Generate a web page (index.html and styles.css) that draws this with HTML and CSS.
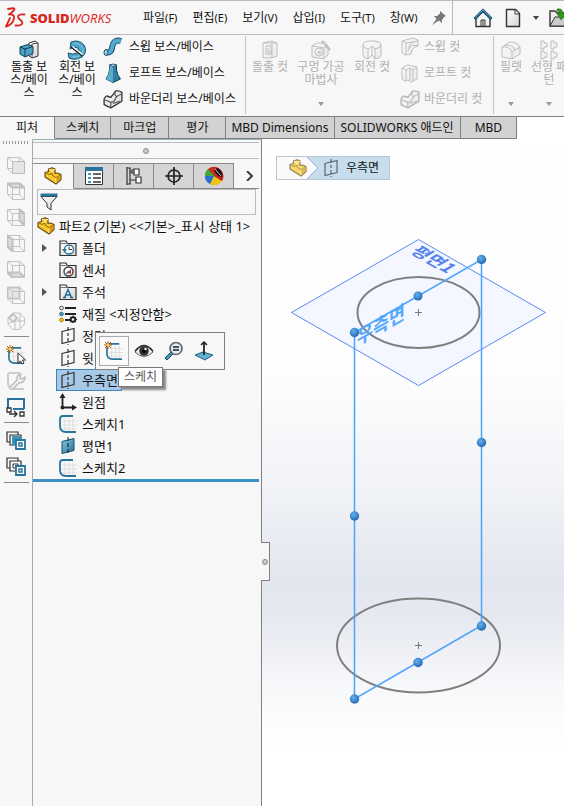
FILE: index.html
```html
<!DOCTYPE html>
<html lang="ko">
<head>
<meta charset="utf-8">
<title>SOLIDWORKS</title>
<link rel="stylesheet" href="styles.css">
</head>
<body>
<svg class="defs" aria-hidden="true">
  <defs>
    <linearGradient id="teal" x1="0" y1="0" x2="1" y2="1"><stop offset="0" stop-color="#8ccbe6"/><stop offset="1" stop-color="#1f6f94"/></linearGradient>
    <linearGradient id="paper" x1="0" y1="0" x2="1" y2="1"><stop offset="0" stop-color="#fff"/><stop offset="1" stop-color="#d4d4d4"/></linearGradient>
    <radialGradient id="ball" cx=".4" cy=".35" r=".7"><stop offset="0" stop-color="#62b2ee"/><stop offset="1" stop-color="#2263ad"/></radialGradient>
    <symbol id="part" viewBox="0 0 18 18">
      <path d="M1 5.500 4.500 4.500V2L8 .7 11 2v4.500L13.500 6 17 7.500v5L12 17 1 10Z" fill="#f8c92c" stroke="#6b4b12" stroke-width="1.200" stroke-linejoin="round"/>
      <path d="M1.500 5.500 5 7.500l3-1.500v2l4 2.700 4.500-3" fill="none" stroke="#8a6416"/>
      <path d="m5 2.300 3 1.200L11 2.300M8 3.500V6M12 11v5" fill="none" stroke="#fff0a8"/>
      <path d="m12.500 11.500 4-3.500v4.500l-4 3.500Z" fill="#d99a12"/>
    </symbol>
    <symbol id="plane" viewBox="0 0 18 18">
      <path d="M3 4.500 15 1.500v12L3 16.500Z" fill="none" stroke="#333" stroke-width="1.200"/>
      <path d="M9 0v18" stroke="#333" stroke-width="1.200" stroke-dasharray="4 2 3 2"/>
    </symbol>
    <symbol id="sketch" viewBox="0 0 18 18">
      <path d="M6 3v14M10 3v14M14 3v14M3 6h15M3 10h15M3 14h15" stroke="#ddd"/>
      <path d="M14 1H4Q1 1 1 4v7q0 6 6 6h10" fill="none" stroke="#27749c" stroke-width="1.800"/>
    </symbol>
    <symbol id="spark" viewBox="0 0 8 8">
      <path d="M4 0v8M0 4h8M1 1l6 6M7 1 1 7" stroke="#b35a00"/><circle cx="4" cy="4" r="1.500" fill="#ffd24a"/>
    </symbol>
    <symbol id="folder" viewBox="0 0 18 18">
      <path d="M1 16.500V2h6l1.500 2.500H17v12Z" fill="url(#paper)" stroke="#333" stroke-width="1.200"/>
      <path d="M1.500 4.500H9" stroke="#777"/>
    </symbol>
    <symbol id="cube" viewBox="0 0 18 18">
      <path d="M.5 1.500h12v11H.5ZM5.500 5.500h12v12h-12ZM.5 1.500l5 4M12.500 1.500l5 4M.5 12.500l5 5M12.500 12.500l5 5" fill="none" stroke="#c3c3c3"/>
    </symbol>
    <symbol id="boundary" viewBox="0 0 18 18">
      <path d="M1 9q2-4 4-2t6-5q3-1 6 1v8L7 17 1 14Z" fill="url(#paper)" stroke="#333" stroke-width="1.200" stroke-linejoin="round"/>
      <path d="M1 9.500 7 12q3 0 4-3t6-4.500M7 12v5M5 7q2 1 3 0M11 2q-1 3 1 5M9 13l6-2" fill="none" stroke="#555"/>
    </symbol>
    <symbol id="layers" viewBox="0 0 20 20">
      <path d="M1 1h11v10H1Z" fill="#f7f7f7" stroke="#333" stroke-width="1.200"/><path d="M4 4h11v10H4Z" fill="#f7f7f7" stroke="#333" stroke-width="1.200"/>
    </symbol>
    <symbol id="layerbadge" viewBox="0 0 20 20">
      <path d="M10 9h9v9h-9Z" fill="#fff" stroke="#27749c" stroke-width="1.800"/><path d="M13 12h3v3h-3Z" fill="#fff" stroke="#27749c" stroke-width="1.500"/>
    </symbol>
    <symbol id="caret" viewBox="0 0 6 4"><path d="M0 0h6L3 4Z" fill="currentColor"/></symbol>
  </defs>
</svg>

<header class="menubar">
  <a class="logo" href="#" aria-label="SOLIDWORKS">
    <svg class="ds" viewBox="0 0 22 22" fill="none" stroke="#d9261c" stroke-width="1.800" stroke-linecap="round" stroke-linejoin="round">
      <path d="M3 2q7-1.500 6.500 0Q9 4 4 7.500q6-.5 5 4Q7.500 18 1 19.500L5 11"/>
      <path d="M19.500 7.500q-6-.5-6.500 2 0 1.500 2.500 3.500t1.500 4q-1.500 2-6.500 1.500"/>
    </svg>
    <span class="word"><b>SOLID</b>WORKS</span>
  </a>
  <nav class="menus">
    <button>파일<small>(F)</small></button>
    <button>편집<small>(E)</small></button>
    <button>보기<small>(V)</small></button>
    <button>삽입<small>(I)</small></button>
    <button>도구<small>(T)</small></button>
    <button>창<small>(W)</small></button>
  </nav>
  <button class="pin" aria-label="고정"><svg class="i14" viewBox="0 0 14 14"><path d="m8 0 6 5-2 1-2 3v3L7 9.500 0 14l4.500-6L2 5h3l3-2.500Z" fill="#777"/></svg></button>
  <div class="quick">
    <button aria-label="홈"><svg class="i20" viewBox="0 0 20 20"><path d="M3 9v9.500h14V9l-7-6Z" fill="#f5f5f5" stroke="#333" stroke-width="1.400"/><path d="m1.500 11 8.500-8.500 8.500 8.500" fill="none" stroke="#174f70" stroke-width="3"/><path d="M2 10 10 2l8 8" fill="none" stroke="#4c9fc5"/><path d="M8 18v-6h4v6M10 12v6" fill="none" stroke="#333"/></svg></button>
    <button aria-label="새로 만들기"><svg class="i20" viewBox="0 0 20 20"><path d="M3.500 1.500h9l4 4v13h-13Z" fill="url(#paper)" stroke="#333" stroke-width="1.400"/><path d="M12 2v4h4" fill="#fff" stroke="#333"/></svg></button>
    <button class="more" aria-label="새로 만들기 옵션"><svg class="caret"><use href="#caret"/></svg></button>
    <button aria-label="열기"><svg class="i20" viewBox="0 0 20 20"><path d="M1 18V3h5l2 2h10v13Z" fill="#ececec" stroke="#333" stroke-width="1.400"/><path d="m1 18 5-9h14l-5 9Z" fill="#ccc" stroke="#333"/><path d="M8 1q6-1 6 5h3l-5 6-4-6h3q0-3-3-3Z" fill="#2e9b19" stroke="#1c6b0f" stroke-width=".5"/></svg></button>
  </div>
</header>

<section class="ribbon">
  <div class="group boss">
    <button class="big"><svg class="i20" viewBox="0 0 20 20"><path d="M10 3 16 1l3 2v13l-6 2-3-2Z" fill="url(#paper)" stroke="#333"/><path d="m13 4 6-1M13 4v13" stroke="#555"/><path d="m1 7 8-2.500 5 2v7L6 17l-5-3Z" fill="#4ca3c6" stroke="#123f55"/><path d="m1 7 5 2 8-2.500M6 9v8" fill="none" stroke="#123f55"/></svg><span>돌출 보스/베이스</span></button>
    <button class="big"><svg class="i20" viewBox="0 0 20 20"><path d="M4 2q8-3 13 3 4 7-2 12-7 4-13 1l-1-5q5 2 9 0 3-2 1-5-4-2-8 1Z" fill="#4ca3c6" stroke="#175875"/><path d="M6 3q6 0 9 4t-1 8q-4 3-9 2" fill="none" stroke="#8bcce5"/><path d="m5 7 10 8" stroke="#fff" stroke-width="2.500"/><path d="m4 7 11 9" stroke="#111" stroke-width="1.200"/></svg><span>회전 보스/베이스</span></button>
    <ul class="list">
      <li><button><svg class="i20" viewBox="0 0 20 20"><path d="M2 15q6 2 7-4t4-7q2-1 5 0" fill="none" stroke="#174f6b" stroke-width="6"/><path d="M2 15q6 2 7-4t4-7q2-1 5 0" fill="none" stroke="#55acd0" stroke-width="4"/><ellipse cx="3" cy="15.500" rx="2" ry="3" fill="#92cfe8" stroke="#174f6b"/></svg><span>스윕 보스/베이스</span></button></li>
      <li><button><svg class="i20" viewBox="0 0 20 20"><path d="M6.500 2v5q-.5 5-3.500 9l7 3.500 7.500-3.500q-3.500-4-4-9V2Z" fill="#2f7fa5" stroke="#123f55"/><path d="M6.500 7q-.5 5-3.500 9l7 3.500V4l-3.500-2Z" fill="#5eaecb"/><path d="M6.500 2q3.500-2 7 0-3.500 3-7 0" fill="#e8f3f8" stroke="#295f78"/></svg><span>로프트 보스/베이스</span></button></li>
      <li><button><svg class="i20"><use href="#boundary"/></svg><span>바운더리 보스/베이스</span></button></li>
    </ul>
  </div>
  <div class="group cut off">
    <button class="big" disabled><svg class="i20" viewBox="0 0 20 20"><path d="m3 3 9-2 5 2v13l-5 2H3Z" fill="url(#paper)" stroke="#555"/><path d="M3 3h9v15M12 3h5M6 6h5v8H6Zm2 2v4h4" fill="none" stroke="#555"/></svg><span>돌출 컷</span></button>
    <button class="big wide" disabled><svg class="i20" viewBox="0 0 20 20"><path d="m1 6 5-3h8l3 3v9l-4 4-12-2Z" fill="url(#paper)" stroke="#555"/><circle cx="8" cy="12" r="4" fill="none" stroke="#555"/><circle cx="8.500" cy="12.500" r="2" fill="#888"/><path d="m1 6 12 2v11M13 8l4-2" fill="none" stroke="#555"/><path d="m11 1 8 9" stroke="#555" stroke-width="2.500"/><path d="M14 1v4M12 3h4" stroke="#999"/></svg><span>구멍 가공 마법사</span><svg class="caret low"><use href="#caret"/></svg></button>
    <button class="big" disabled><svg class="i20" viewBox="0 0 20 20"><path d="M1 5q0-4 9-4t9 4v10q0 3-6 4V9l-3-3-4 4v9q-5-1-5-4Z" fill="url(#paper)" stroke="#555"/><path d="M10 6v9l-4 4M10 15l3 4M1 5q0 3 5 4M19 5q0 3-6 4" fill="none" stroke="#555"/></svg><span>회전 컷</span></button>
    <ul class="list">
      <li><button disabled><svg class="i20" viewBox="0 0 20 20"><path d="M2 4 13 1l5 2v6q-6 1-7 8l-6 1-3-2Z" fill="url(#paper)" stroke="#555"/><path d="m2 4 4 2 12-2M6 6v12M18 9q-8-3-10 5M14 5q-5 1-5 6" fill="none" stroke="#555"/></svg><span>스윕 컷</span></button></li>
      <li><button disabled><svg class="i20" viewBox="0 0 20 20"><path d="m2 5 6-3 9 2v12l-6 3-3-2-3 1-3-2Z" fill="url(#paper)" stroke="#555"/><path d="m2 5 4 2 4-2 3 2 4-3M6 7v11M10 5v12M13 7v11" fill="none" stroke="#555"/></svg><span>로프트 컷</span></button></li>
      <li><button disabled><svg class="i20"><use href="#boundary"/></svg><span>바운더리 컷</span></button></li>
    </ul>
  </div>
  <div class="group feature off">
    <button class="big" disabled><svg class="i20" viewBox="0 0 20 20"><path d="m1 7 8-5q7 0 10 5v7l-8 5-10-2Z" fill="url(#paper)" stroke="#555"/><path d="M1 7q8-1 10 5v7M11 12l8-5M4 5q8 0 10 5" fill="none" stroke="#555"/></svg><span>필렛</span><svg class="caret low"><use href="#caret"/></svg></button>
    <button class="big" disabled><svg class="i20" viewBox="0 0 20 20"><path d="M2 1h3v2h3v4H5v2H2ZM12 1h3v2h3v4h-3v2h-3ZM2 11h3v2h3v4H5v2H2ZM12 11h3v2h3v4h-3v2h-3Z" fill="#eee" stroke="#555"/></svg><span>선형 패턴</span><svg class="caret low"><use href="#caret"/></svg></button>
  </div>
</section>

<nav class="tabs">
  <button class="on">피처</button><button>스케치</button><button>마크업</button><button>평가</button><button>MBD Dimensions</button><button>SOLIDWORKS 애드인</button><button>MBD</button>
</nav>

<main class="work">
  <aside class="side">
    <i class="grip"></i>
    <button aria-label="정면 보기"><svg class="i18" viewBox="0 0 18 18"><use href="#cube" width="18" height="18"/><path d="M5.500 5.500h12v12h-12Z" fill="#e6e6e6" stroke="#bbb"/></svg></button>
    <button aria-label="윗면 보기"><svg class="i18" viewBox="0 0 18 18"><path d="M.5 1.500h12l5 4h-12Z" fill="#ddd" stroke="#bbb" stroke-width="2"/><use href="#cube" width="18" height="18"/></svg></button>
    <button aria-label="우측면 보기"><svg class="i18" viewBox="0 0 18 18"><path d="m12.500 1.500 5 4v12l-5-5Z" fill="#ddd" stroke="#bbb" stroke-width="2"/><use href="#cube" width="18" height="18"/></svg></button>
    <button aria-label="좌측면 보기"><svg class="i18" viewBox="0 0 18 18"><path d="m.5 1.500 5 4v12l-5-5Z" fill="#ddd" stroke="#bbb" stroke-width="2"/><use href="#cube" width="18" height="18"/></svg></button>
    <button aria-label="아랫면 보기"><svg class="i18" viewBox="0 0 18 18"><path d="M.5 12.500h12l5 5h-12Z" fill="#ddd" stroke="#bbb" stroke-width="2"/><use href="#cube" width="18" height="18"/></svg></button>
    <button aria-label="배면 보기"><svg class="i18" viewBox="0 0 18 18"><path d="M.5 1.500h12v11H.5Z" fill="#e6e6e6" stroke="#ccc" stroke-width="2"/><use href="#cube" width="18" height="18"/></svg></button>
    <button aria-label="등각 보기"><svg class="i18" viewBox="0 0 18 18"><path d="M1 5.500 6 1h7l4.500 5v6l-5 5.500H6L1 12ZM6 1v3l7 5V1M1 12l5-3h11.500M8 9v8.500M13 9v8" fill="none" stroke="#c3c3c3"/><path d="m6 2 4 4-4 4-4-4Z" fill="#eee" stroke="#bbb" stroke-width="1.500"/></svg></button>
    <hr>
    <button aria-label="스케치 선택"><svg class="i20" viewBox="0 0 20 20"><use href="#sketch" x="2" y="2" width="17" height="17"/><use href="#spark" x="0" y="0" width="8" height="8"/><path d="M12 8v10l2.500-2 1.500 3 2-1-1.500-3h3Z" fill="#fff" stroke="#333"/></svg></button>
    <button aria-label="도구"><svg class="i20" viewBox="0 0 20 20"><path d="M14 2H4Q2 2 2 4v8q0 6 6 6h10" fill="none" stroke="#ccc" stroke-width="2"/><path d="m4 16 7-7q-1-5 4-6l-1 4 2 1 3-2q0 6-6 6l-6 6q-3 1-3-2Z" fill="#eee" stroke="#bbb" stroke-width="1.300"/></svg></button>
    <button aria-label="구속 조건"><svg class="i20" viewBox="0 0 20 20"><path d="M2 12V2h16v10M7 12h11" fill="none" stroke="#27749c" stroke-width="2"/><path d="M1 11h4v4H1ZM14 15h4v4h-4Z" fill="#fff" stroke="#333" stroke-width="1.300"/><path d="M3 17h8M8 14l3 3-3 3" fill="none" stroke="#333" stroke-width="1.400"/></svg></button>
    <hr>
    <button aria-label="레이어"><svg class="i20" viewBox="0 0 20 20"><use href="#layers" width="20" height="20"/><path d="M6 5h9v9H6Z" fill="#3d93bb"/><use href="#layerbadge" width="20" height="20"/></svg></button>
    <button aria-label="레이어 속성"><svg class="i20" viewBox="0 0 20 20"><use href="#layers" width="20" height="20"/><path d="M7 7h5v4H7Z" fill="#fff" stroke="#333"/><use href="#layerbadge" width="20" height="20"/></svg></button>
    <hr>
  </aside>

  <aside class="panel">
    <div class="handle"><i class="dot"></i></div>
    <nav class="ptabs">
      <button class="on" aria-label="FeatureManager"><svg class="i18"><use href="#part"/></svg></button>
      <button aria-label="PropertyManager"><svg class="i20" viewBox="0 0 20 20"><path d="M1.500 1.500h17v17h-17Z" fill="#fff" stroke="#333"/><path d="M1 1h18v4H1Z" fill="#27749c"/><path d="M4 7h3v2H4ZM4 11h3v2H4ZM4 15h3v2H4Z" fill="#3f95bd"/><path d="M9 8h8M9 12h8M9 16h8" stroke="#333" stroke-width="1.500"/></svg></button>
      <button aria-label="ConfigurationManager"><svg class="i20" viewBox="0 0 20 20"><path d="M3 1v18M3 2h4M3 18h4M6 2v16M6 6h5M6 14h6" fill="none" stroke="#333" stroke-width="1.200"/><path d="M10 3h5v6h-5ZM12 11h5v6h-5ZM8 4h2v3H8Z" fill="#fff" stroke="#333" stroke-width="1.200"/></svg></button>
      <button aria-label="DimXpertManager"><svg class="i20" viewBox="0 0 20 20"><circle cx="10" cy="10" r="6" fill="none" stroke="#222" stroke-width="1.700"/><path d="M10 1v18M1 10h18" stroke="#222" stroke-width="1.700"/></svg></button>
      <button aria-label="DisplayManager"><svg class="i20" viewBox="0 0 20 20"><circle cx="10" cy="10" r="9" fill="#2477c8"/><path d="M10 10 4 3a9 9 0 0 1 13 1Z" fill="#d9271e"/><path d="M10 10 4 3a9 9 0 0 0-3 7Z" fill="#40a936"/><path d="M10 10H1a9 9 0 0 0 5 8Z" fill="#2d6fd0"/><path d="M10 10 6 18a9 9 0 0 0 12-3Z" fill="#f2c313"/><path d="M10 10 17 4a9 9 0 0 1 1 11Z" fill="#c42418"/><path d="M10 4q3-3 5-1 4 4 3 8-6-1-8-7Z" fill="#111"/><path d="m11 3 6 7" stroke="#fff" stroke-width=".8"/></svg></button>
      <button class="next" aria-label="다음"><svg class="i10" viewBox="0 0 10 10"><path d="m3 0 5 5-5 5" fill="none" stroke="#333" stroke-width="1.800"/></svg></button>
    </nav>
    <label class="filter">
      <svg class="i18" viewBox="0 0 18 18"><path d="M1 3.500h16l-6 7v6.500l-4-3v-3.500Z" fill="url(#paper)" stroke="#333"/><path d="M.5.500h17v3H.5Z" fill="#27749c"/></svg>
      <input type="text" aria-label="필터">
    </label>
    <ul class="tree">
      <li class="root"><svg class="i18"><use href="#part"/></svg><span>파트2 (기본) &lt;&lt;기본&gt;_표시 상태 1&gt;</span></li>
      <li class="fold"><svg class="i18" viewBox="0 0 18 18"><use href="#folder" width="18" height="18"/><circle cx="10" cy="10.500" r="4.500" fill="#fff" stroke="#27749c" stroke-width="1.300"/><path d="M10 7.500v3h3" fill="none" stroke="#333"/><path d="m3 10 2.500 3.500L8 10Z" fill="#27749c"/></svg><span>폴더</span></li>
      <li><svg class="i18" viewBox="0 0 18 18"><use href="#folder" width="18" height="18"/><circle cx="9.500" cy="10.500" r="4.500" fill="#fff" stroke="#333" stroke-width="1.300"/><path d="m8 12 4-4v5Z" fill="#e2341d"/><path d="m7 13 3-3" stroke="#27749c" stroke-width="1.500"/></svg><span>센서</span></li>
      <li class="fold"><svg class="i18" viewBox="0 0 18 18"><use href="#folder" width="18" height="18"/><path d="m5.500 14.500 3.500-8 3.500 8M6.500 12h5M4 14.500h3M11 14.500h3" fill="none" stroke="#206b92" stroke-width="1.400"/></svg><span>주석</span></li>
      <li><svg class="i18" viewBox="0 0 18 18"><path d="M6 3h11M6 9h11M6 15h5" stroke="#222" stroke-width="2"/><circle cx="2.500" cy="3" r="1.800" fill="#fff" stroke="#444"/><circle cx="2.500" cy="9" r="1.800" fill="#4ca3c6" stroke="#206b92"/><circle cx="2.500" cy="15" r="1.800" fill="#fc0" stroke="#a87700"/><circle cx="14" cy="14.500" r="2.300" fill="#fff" stroke="#222" stroke-width="2"/><path d="M14 10.500v8M10 14.500h8M11.200 11.700l5.600 5.600M16.800 11.700l-5.600 5.600" stroke="#222" stroke-dasharray="2 4 2"/></svg><span>재질 &lt;지정안함&gt;</span></li>
      <li><svg class="i18"><use href="#plane"/></svg><span>정면</span></li>
      <li><svg class="i18"><use href="#plane"/></svg><span>윗면</span></li>
      <li class="sel"><svg class="i18"><use href="#plane"/></svg><span>우측면</span>
        <div class="flyout" role="toolbar">
          <button class="on" aria-label="스케치"><svg class="i20" viewBox="0 0 20 20"><use href="#sketch" x="2" y="2" width="17" height="17"/><use href="#spark" width="8" height="8"/></svg></button>
          <button aria-label="표시"><svg class="i20" viewBox="0 0 20 20"><path d="M1 11q9-12 18 0-9 9-18 0Z" fill="#eee" stroke="#555"/><circle cx="10" cy="10" r="4.800" fill="#333"/><circle cx="10" cy="10" r="2" fill="#000"/><circle cx="11.500" cy="8" r="1.200" fill="#fff"/><path d="M1 10Q10-1 19 10" fill="none" stroke="#333" stroke-width="1.300"/></svg></button>
          <button aria-label="선택 확대"><svg class="i20" viewBox="0 0 20 20"><path d="m1 17 6-6 2 2-6 6Z" fill="#3e95bd" stroke="#174f6b"/><circle cx="12" cy="7.500" r="6" fill="#dcebf2" stroke="#666" stroke-width="1.700"/><path d="M9 6h6M9 9h6" stroke="#222" stroke-width="1.600"/></svg></button>
          <button aria-label="면에 수직으로 보기"><svg class="i20" viewBox="0 0 20 20"><path d="m1 14 8-3 10 3-8 5Z" fill="#63b1d0" stroke="#1e607f"/><path d="M10 14V2" stroke="#222" stroke-width="1.800"/><path d="m7 4 3-3 3 3" fill="none" stroke="#222" stroke-width="1.500"/></svg></button>
        </div>
        <div class="tip" role="tooltip">스케치</div>
      </li>
      <li><svg class="i18" viewBox="0 0 18 18"><path d="M3.500 3v11.500H15" fill="none" stroke="#222" stroke-width="1.800"/><path d="m3.500 0 3 5h-6ZM18 14.500l-5-3v6Z" fill="#222"/><circle cx="3.500" cy="14.500" r="2" fill="#222"/></svg><span>원점</span></li>
      <li><svg class="i18"><use href="#sketch"/></svg><span>스케치1</span></li>
      <li><svg class="i18" viewBox="0 0 18 18"><path d="M3 4.500 15 1.500v12L3 16.500Z" fill="url(#teal)" stroke="#174f6b"/><path d="M9 0v18" stroke="#222" stroke-dasharray="4 2"/></svg><span>평면1</span></li>
      <li><svg class="i18"><use href="#sketch"/></svg><span>스케치2</span></li>
    </ul>
    <button class="notch" aria-label="패널 접기"><i class="dot"></i></button>
  </aside>

  <section class="view">
    <svg class="model" viewBox="262 139 302 667" preserveAspectRatio="xMinYMin meet">
      <path d="m291.500 312.500 127-73 127 73-127 73Z" fill="#f4f7ff" stroke="#5c86f2"/>
      <text class="iso" transform="matrix(.87 .5 -.87 .5 409 252)" fill="#5583ee">평면1</text>
      <ellipse cx="418.500" cy="312.500" rx="61" ry="35.500" fill="none" stroke="#808080" stroke-width="2"/>
      <ellipse cx="418.500" cy="645.500" rx="81.500" ry="47" fill="none" stroke="#808080" stroke-width="2"/>
      <path d="M415 312.500h7M418.500 309v7M415 645.500h7M418.500 642v7" stroke="#777"/>
      <path d="M354.500 332.500 481.500 259.500v366L354.500 699Z" fill="none" stroke="#4ba3ff" stroke-width="1.500"/>
      <text class="iso big-iso" transform="matrix(.87 -.5 0 1 357 346)" fill="#55a7fb">우측면</text>
      <g fill="url(#ball)"><circle cx="481.500" cy="259.500" r="4.700"/><circle cx="418" cy="296" r="4.500"/><circle cx="354.500" cy="332.500" r="4.700"/><circle cx="481.500" cy="442.500" r="4.700"/><circle cx="354.500" cy="516" r="4.700"/><circle cx="481.500" cy="626" r="4.700"/><circle cx="418" cy="662.500" r="4.700"/><circle cx="354.500" cy="699" r="4.700"/></g>
    </svg>
    <nav class="crumbs">
      <a href="#" aria-label="파트2"><svg class="i18 pale"><use href="#part"/></svg></a>
      <svg class="arrow" viewBox="0 0 12 22"><path d="M0 0h12v22H0L11 11Z" fill="#c7dded"/><path d="m0 0 11 11L0 22" fill="none" stroke="#8fb0da"/></svg>
      <a class="cur" href="#"><svg class="i18 pale"><use href="#plane"/></svg><span>우측면</span></a>
    </nav>
  </section>
</main>
</body>
</html>
```
FILE: styles.css
```css
* { box-sizing: border-box; }
body {
  margin: 0;
  min-height: 100vh;
  display: flex;
  flex-direction: column;
  overflow: hidden;
  background: #f7f7f7;
  color: #111;
  font: 12px/16px "Noto Sans", "Noto Sans CJK KR", sans-serif;
}
button { border: 0; padding: 0; background: none; font: inherit; color: inherit; }
a { color: inherit; text-decoration: none; }
ul { margin: 0; padding: 0; list-style: none; }
svg { display: block; flex: none; }
.defs { position: absolute; width: 0; height: 0; }
.i10 { width: 10px; height: 10px; }
.i14 { width: 14px; height: 14px; }
.i18 { width: 18px; height: 18px; }
.i20 { width: 20px; height: 20px; }
.caret { width: 6px; height: 4px; color: #444; }

.menubar {
  display: flex;
  align-items: center;
  height: 35px;
  border-top: 1px solid #bbb;
  border-bottom: 1px solid #bbb;
  white-space: nowrap;
}
.logo { display: flex; flex: none; align-items: center; gap: 3px; width: 143px; padding-left: 5px; color: #d9261c; }
.ds { width: 22px; height: 22px; }
.word { font: italic 13px/16px "Open Sans", sans-serif; }
.word b { font-weight: 800; font-style: normal; }
.menus { display: flex; gap: 15px; flex: none; }
.menus small { font-size: 11px; }
.pin { margin: 0 6px 0 14px; }
.quick {
  display: flex;
  align-items: center;
  gap: 10px;
  align-self: stretch;
  flex: 1 0 auto;
  padding-left: 20px;
  border-left: 1px solid #bbb;
}

.ribbon { display: flex; height: 81px; white-space: nowrap; }
.group { display: flex; flex: none; padding: 4px 0 0 5px; border-right: 1px solid #c4c4c4; margin: 1px 0 2px; }
.boss { width: 246px; }
.cut { width: 248px; padding-left: 0; }
.feature { flex: 1 0 70px; padding-left: 0; border: 0; }
.big {
  display: flex;
  flex-direction: column;
  align-items: center;
  width: 48px;
  height: 66px;
  line-height: 13px;
  white-space: normal;
}
.big span { width: 42px; text-align: center; word-break: break-all; }
.cut .wide { width: 54px; }
.wide span { width: 50px; word-break: keep-all; }
.feature .big { width: 34px; }
.feature .big + .big { width: 42px; }
.low { margin-top: auto; }
.list { margin-top: -6px; padding-left: 2px; }
.cut .list { padding-left: 4px; }
.list button { display: flex; align-items: center; gap: 6px; height: 26px; }
.cut .list button { gap: 4px; }
.off { color: #b0b0b0; }
.off .i20 { opacity: .35; }
.off .caret { color: #999; }

.tabs { display: flex; height: 23px; border-top: 1px solid #808080; }
.tabs button { flex: none; padding: 0 11px; border-right: 1px solid #808080; border-bottom: 1px solid #808080; background: #d2d2d2; }
.tabs .on { background: #f7f7f7; padding: 0 16px; border-bottom-color: #f7f7f7; }
.tabs button:nth-child(3) { padding: 0 12px; }
.tabs button:nth-child(4) { padding: 0 17px; }
.tabs button:nth-child(n+5) { padding: 0 5px; }
.tabs button:nth-child(6) { padding: 0 6px; }
.tabs button:last-child { padding: 0 14px; }
.tabs::after { content: ""; flex: 1; background: #fff; }

.work { display: flex; flex: 1; }
.side {
  display: flex;
  flex-direction: column;
  align-items: center;
  width: 33px;
  flex: none;
  border-right: 1px solid #aaa;
}
.side button { height: 26px; }
.side hr { width: 25px; margin: 2px 0 5px; border: 0; border-top: 1px solid #888; }
.grip { width: 27px; height: 3px; margin: 2px 0 8px; background: repeating-linear-gradient(90deg, #999 0 1px, transparent 1px 3px); }

.panel { position: relative; width: 229px; flex: none; border-right: 1px solid #808080; border-top: 1px solid #9ab0ba; }
.handle { display: flex; justify-content: center; align-items: center; height: 17px; margin: 2px 2px 4px 0; border-top: 1px solid #bbb; border-bottom: 1px solid #bbb; }
.dot { width: 6px; height: 6px; border: 1px solid #888; border-radius: 50%; background: #ccc; }
.ptabs { display: flex; height: 26px; margin-right: 2px; }
.ptabs button { display: flex; justify-content: center; align-items: center; width: 40px; border: solid #888; border-width: 1px 1px 1px 0; background: #d5d5d5; }
.ptabs .on { width: 41px; background: none; border-bottom-color: transparent; }
.ptabs .next { flex: 1; padding-left: 4px; background: none; border-width: 0 0 1px; }
.filter { display: flex; align-items: center; height: 26px; margin: 0 5px 0 4px; padding-left: 2px; border: 1px solid #bbb; }
.filter input { flex: 1; min-width: 0; border: 0; outline: 0; background: none; }
.tree { border-bottom: 3px solid #3a8fc4; margin-right: 2px; font-size: 13px; }
.tree li { position: relative; display: flex; align-items: center; gap: 5px; height: 22px; padding-left: 26px; white-space: nowrap; }
.tree .root { padding-left: 4px; gap: 4px; }
.tree .fold::before { content: ""; position: absolute; left: 9px; top: 7px; border: 4px solid transparent; border-left: 5px solid #555; border-right: 0; }
.tree .sel { width: 66px; margin-left: 23px; padding-left: 2px; gap: 5px; border: 1px solid #3e86b8; background: #a7c8e6; }
.flyout {
  position: absolute;
  left: 38px;
  top: -38px;
  display: flex;
  align-items: center;
  gap: 10px;
  width: 130px;
  height: 38px;
  padding: 0 3px;
  border: 1px solid #808080;
  background: #f7f7f7;
}
.flyout .on { padding: 4px; border: 1px solid #aaa; background: #fafafa; }
.flyout button:nth-child(2) { margin-left: -5px; }
.tip { position: absolute; left: 61px; top: -3px; z-index: 1; padding: 1px 5px; border: 1px solid #777; background: #fff; color: #555; font-size: 12px; box-shadow: 3px 3px 2px #888; }
.notch { position: absolute; right: -9px; top: 402px; z-index: 1; display: flex; align-items: center; justify-content: center; width: 9px; height: 39px; border: 1px solid #808080; border-left: 0; background: #f7f7f7; }

.view { position: relative; flex: 1; min-width: 0; background: linear-gradient(#fff 0, #fdfdfd 36%, #f1f3f7 52%, #e2e6ee 66%, #e6e9f0 72%, #f7f8fa 82%, #fff 91%); }
.model { width: 100%; }
.iso { font: 700 18px "Noto Sans CJK KR", sans-serif; }
.big-iso { font-size: 20px; }
.crumbs { position: absolute; left: 14px; top: 17px; display: flex; height: 24px; border: 1px solid #b9c6d4; background: #fafafa; }
.crumbs a { display: flex; align-items: center; gap: 6px; padding-left: 12px; }
.crumbs .cur { padding: 0 10px 0 3px; background: #c7dded; }
.arrow { width: 12px; height: 22px; }
.pale { opacity: .7; }
```
